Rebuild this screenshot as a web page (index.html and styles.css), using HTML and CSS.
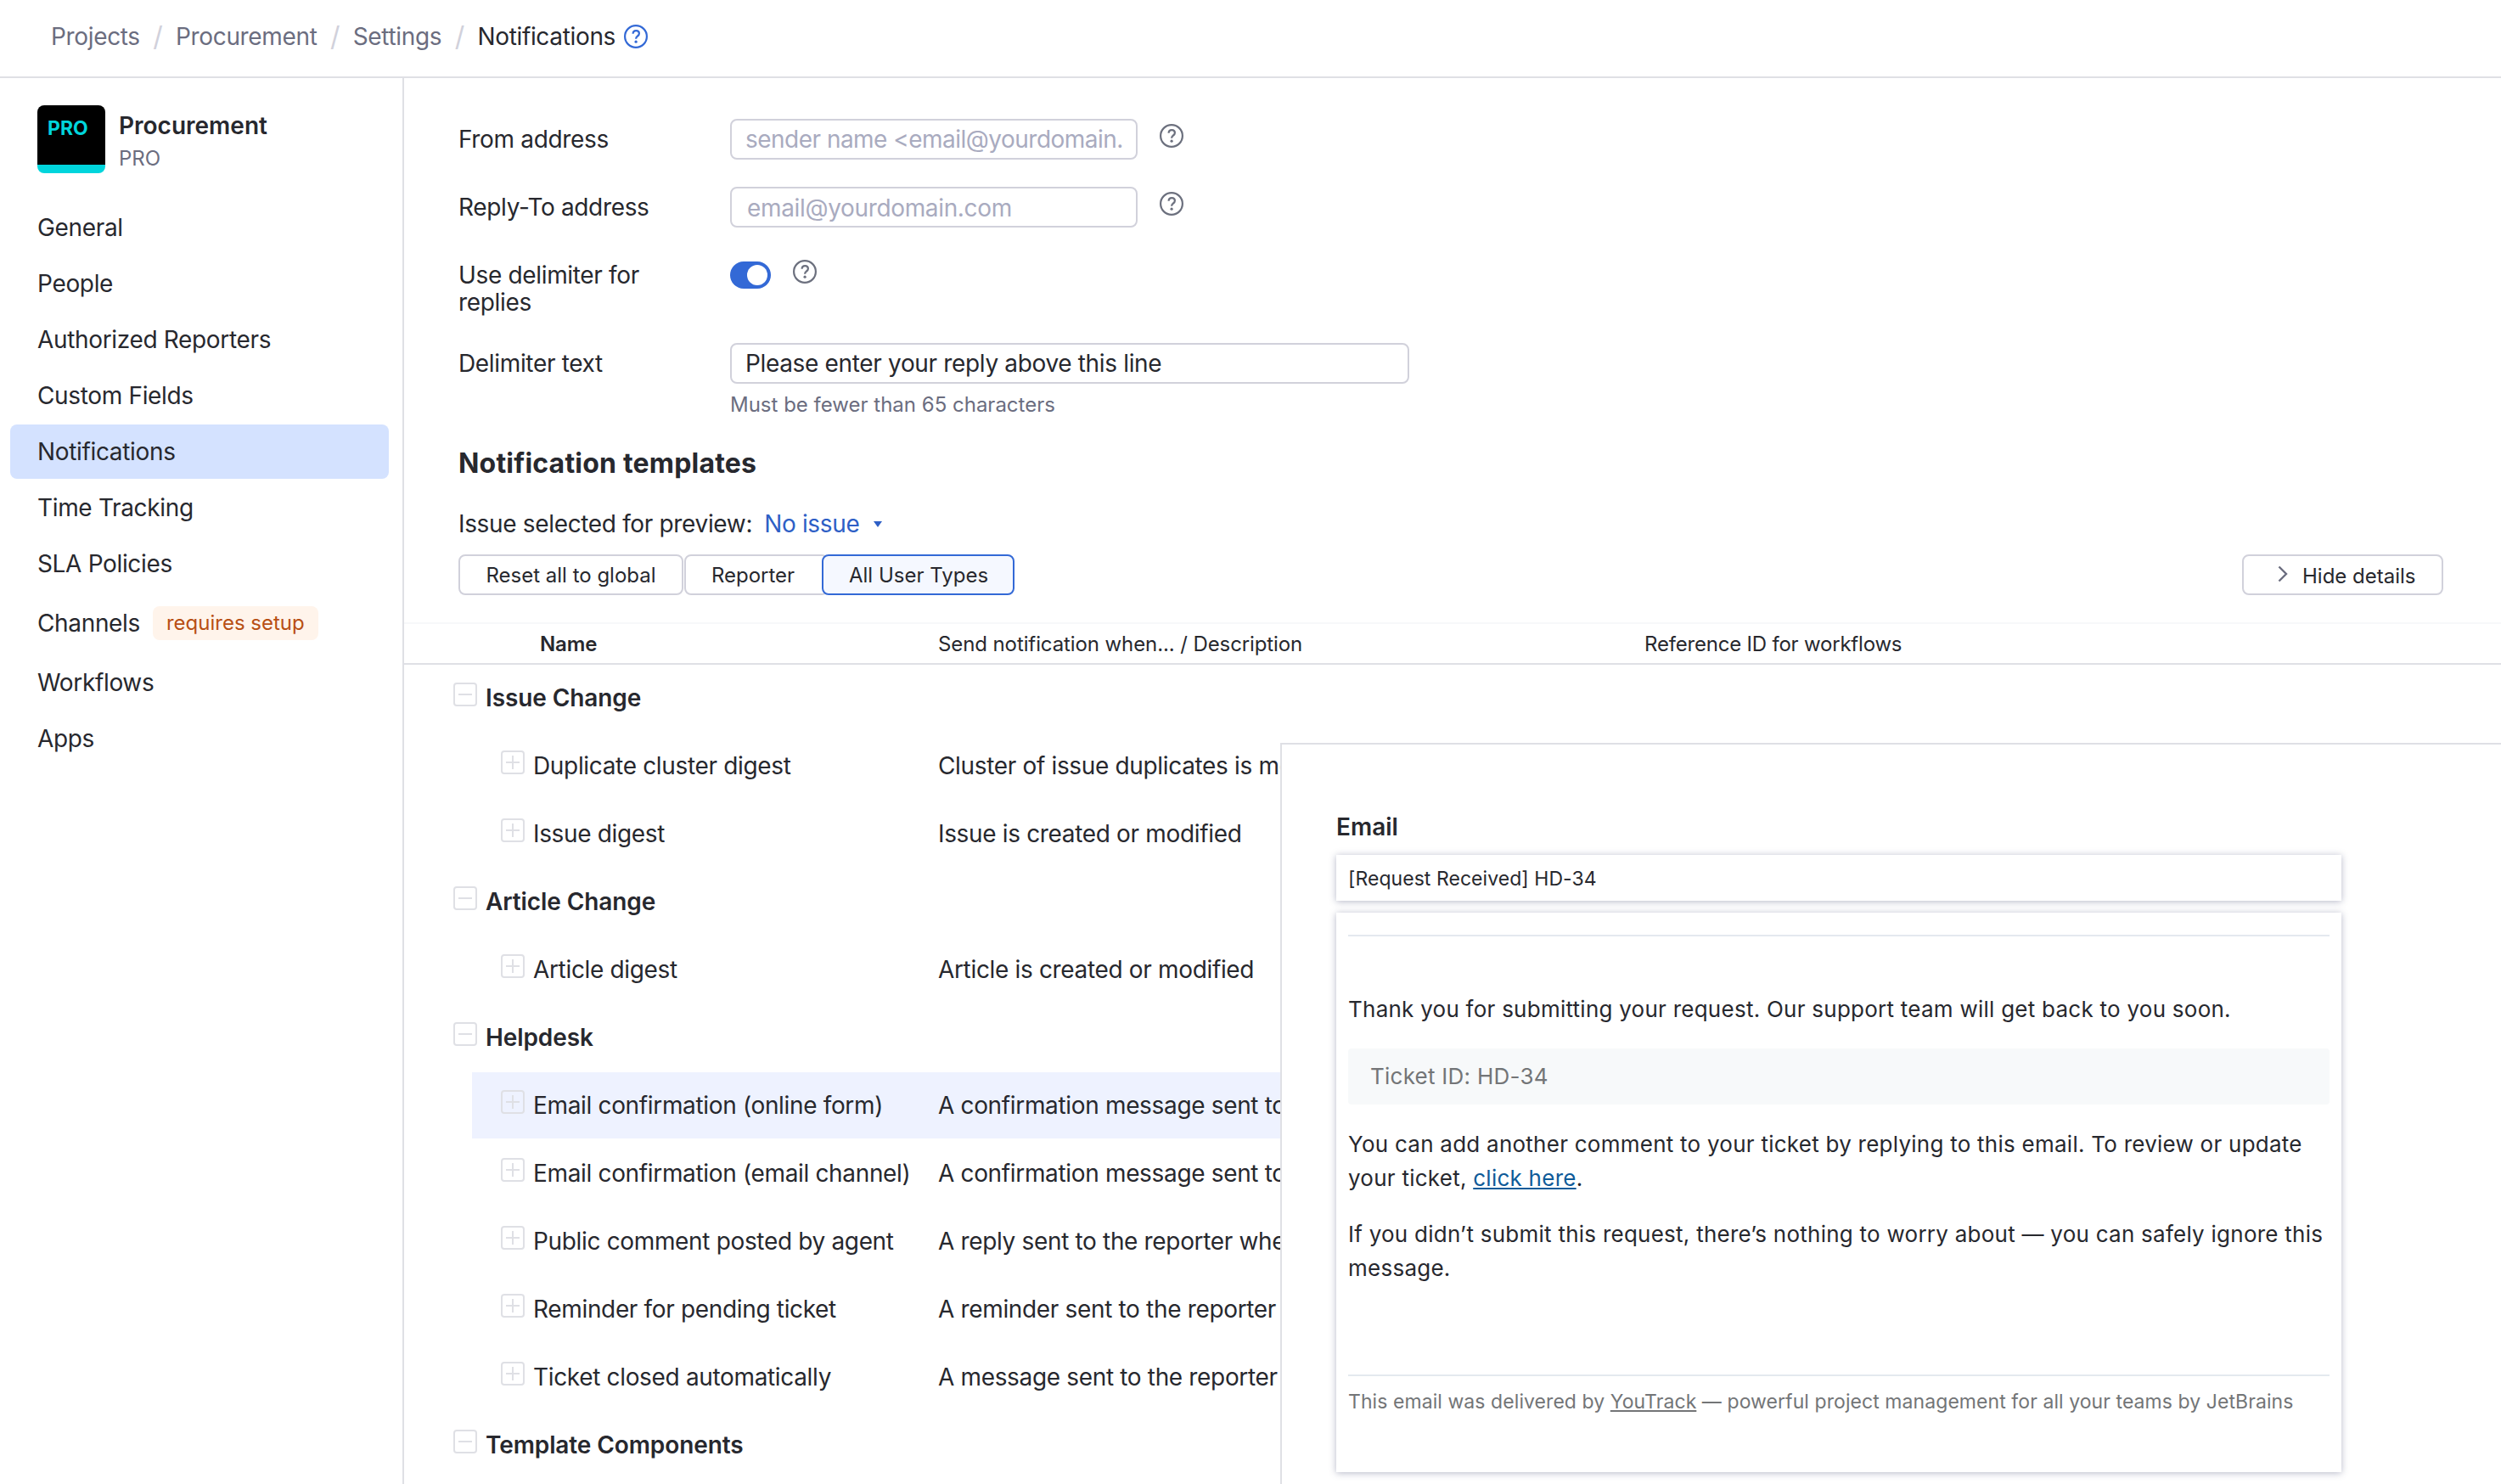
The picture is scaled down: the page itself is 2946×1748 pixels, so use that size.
FILE: index.html
```html
<!DOCTYPE html>
<html lang="en">
<head>
  <meta charset="UTF-8">
  <title>Notifications - Procurement</title>
  <link rel="stylesheet" href="styles.css">
</head>
<body>
  <svg width="0" height="0" class="sprite">
    <symbol id="help" viewBox="0 0 28 28">
      <circle cx="14" cy="14" r="12.9" fill="none" stroke="currentColor" stroke-width="2.2"/>
      <path d="M10.6 10.800c0-2.200 1.500-3.700 3.700-3.700s3.600 1.400 3.600 3.400c0 1.400-.7 2.200-1.900 3-1.300.9-1.900 1.500-1.900 3.300" fill="none" stroke="currentColor" stroke-width="2.2"/>
      <circle cx="14.1" cy="20.2" r="1.600" fill="currentColor"/>
    </symbol>
    <symbol id="minus" viewBox="0 0 28 28">
      <rect x="1" y="1" width="26" height="26" rx="3" fill="none" stroke="currentColor" stroke-width="2"/>
      <path d="M6 14h16" stroke="currentColor" stroke-width="2"/>
    </symbol>
    <symbol id="plus" viewBox="0 0 28 28">
      <rect x="1" y="1" width="26" height="26" rx="3" fill="none" stroke="currentColor" stroke-width="2"/>
      <path d="M6 14h16M14 6v16" stroke="currentColor" stroke-width="2"/>
    </symbol>
  </svg>

  <header class="breadcrumbs">
    <a>Projects</a><span class="sep">/</span>
    <a>Procurement</a><span class="sep">/</span>
    <a>Settings</a><span class="sep">/</span>
    <span class="current">Notifications</span>
    <svg class="help help-blue"><use href="#help"/></svg>
  </header>

  <div class="page">
    <aside class="sidebar">
      <div class="project">
        <div class="avatar">PRO</div>
        <div>
          <div class="project-name">Procurement</div>
          <div class="project-key">PRO</div>
        </div>
      </div>
      <nav>
        <a class="nav-item">General</a>
        <a class="nav-item">People</a>
        <a class="nav-item">Authorized Reporters</a>
        <a class="nav-item">Custom Fields</a>
        <a class="nav-item active">Notifications</a>
        <a class="nav-item">Time Tracking</a>
        <a class="nav-item">SLA Policies</a>
        <a class="nav-item tall">Channels <span class="tag">requires setup</span></a>
        <a class="nav-item">Workflows</a>
        <a class="nav-item">Apps</a>
      </nav>
    </aside>

    <main>
      <form class="settings">
        <div class="field">
          <label>From address</label>
          <input type="text" class="from" placeholder="sender name &lt;email@yourdomain.">
          <svg class="help"><use href="#help"/></svg>
        </div>
        <div class="field">
          <label>Reply-To address</label>
          <input type="text" class="reply" placeholder="email@yourdomain.com">
          <svg class="help"><use href="#help"/></svg>
        </div>
        <div class="field two-lines">
          <label>Use delimiter for replies</label>
          <span class="toggle"></span>
          <svg class="help"><use href="#help"/></svg>
        </div>
        <div class="field">
          <label>Delimiter text</label>
          <input type="text" class="wide" value="Please enter your reply above this line">
        </div>
        <p class="hint">Must be fewer than 65 characters</p>
      </form>

      <h2>Notification templates</h2>
      <div class="preview-issue">Issue selected for preview: <a>No issue</a><svg class="caret" viewBox="0 0 10 7"><path d="M0 0h10L5 7z" fill="currentColor"/></svg></div>
      <div class="toolbar">
        <button class="reset">Reset all to global</button>
        <button class="reporter">Reporter</button>
        <button class="all selected">All User Types</button>
        <button class="details"><svg viewBox="0 0 12 20"><path d="M1.5 1.5L10 10l-8.500 8.500" fill="none" stroke="currentColor" stroke-width="2.400"/></svg>Hide details</button>
      </div>

      <div class="table-head">
        <span class="col-name">Name</span>
        <span class="col-desc">Send notification when... / Description</span>
        <span class="col-ref">Reference ID for workflows</span>
      </div>
      <div class="row group"><svg><use href="#minus"/></svg>Issue Change</div>
      <div class="row"><svg><use href="#plus"/></svg><span class="name">Duplicate cluster digest</span><span>Cluster of issue duplicates is modified</span></div>
      <div class="row"><svg><use href="#plus"/></svg><span class="name">Issue digest</span><span>Issue is created or modified</span></div>
      <div class="row group"><svg><use href="#minus"/></svg>Article Change</div>
      <div class="row"><svg><use href="#plus"/></svg><span class="name">Article digest</span><span>Article is created or modified</span></div>
      <div class="row group"><svg><use href="#minus"/></svg>Helpdesk</div>
      <div class="row highlighted"><svg><use href="#plus"/></svg><span class="name">Email confirmation (online form)</span><span>A confirmation message sent to</span></div>
      <div class="row"><svg><use href="#plus"/></svg><span class="name">Email confirmation (email channel)</span><span>A confirmation message sent to</span></div>
      <div class="row"><svg><use href="#plus"/></svg><span class="name">Public comment posted by agent</span><span>A reply sent to the reporter when</span></div>
      <div class="row"><svg><use href="#plus"/></svg><span class="name">Reminder for pending ticket</span><span>A reminder sent to the reporter</span></div>
      <div class="row"><svg><use href="#plus"/></svg><span class="name">Ticket closed automatically</span><span>A message sent to the reporter</span></div>
      <div class="row group"><svg><use href="#minus"/></svg>Template Components</div>

      <!-- details panel, slides over the table -->
      <section class="panel">
        <h3>Email</h3>
        <div class="card subject">[Request Received] HD-34</div>
        <div class="card message">
          <hr>
          <p class="thanks">Thank you for submitting your request. Our support team will get back to you soon.</p>
          <div class="ticket">Ticket ID: HD-34</div>
          <p>You can add another comment to your ticket by replying to this email. To review or update<br>your ticket, <a>click here</a>.</p>
          <p>If you didn’t submit this request, there’s nothing to worry about — you can safely ignore this<br>message.</p>
          <hr class="bottom">
          <div class="footer">This email was delivered by <a>YouTrack</a> — powerful project management for all your teams by JetBrains</div>
        </div>
      </section>
    </main>
  </div>
</body>
</html>
```
FILE: styles.css
```css
* { box-sizing: border-box; }
body { margin: 0; height: 1748px; overflow: hidden; display: flex; flex-direction: column; background: #fff; color: #27282e; font: 28px/32px Inter, "Liberation Sans", sans-serif; letter-spacing: -0.34px; white-space: nowrap; }
.sprite { position: absolute; }
h2, h3, p { margin: 0; }

.help { width: 28px; height: 28px; color: #6c707e; flex: none; }
.help-blue { color: #3369d6; margin-left: 10px; }

/* header */
.breadcrumbs { display: flex; align-items: center; height: 92px; padding: 0 0 4px 60px; border-bottom: 2px solid #dfe0e5; color: #6b6d7f; flex: none; }
.breadcrumbs .sep { margin: 0 15.5px; color: #d1d1db; font-size: 32px; }
.breadcrumbs .current { color: #27282e; }

.page { display: flex; flex: 1; min-height: 0; }

/* sidebar */
.sidebar { width: 476px; padding: 32px 16px 0 12px; border-right: 2px solid #dfe0e5; flex: none; }
.project { display: flex; gap: 16px; height: 112px; padding-left: 32px; }
.avatar { width: 80px; height: 80px; padding: 11px 0 0 12px; border-radius: 8px; background: linear-gradient(#000 70px, #00d5dc 70px); color: #00d5dc; font-size: 23px; font-weight: 700; letter-spacing: 0; }
.project-name { margin-top: 8px; font-weight: 600; letter-spacing: 0; }
.project-key { margin-top: 7px; font-size: 24px; letter-spacing: 0; color: #6b6d7f; }
.nav-item { display: flex; align-items: center; height: 64px; margin-bottom: 2px; padding-left: 32px; border-radius: 8px; }
.nav-item.active { background: #d4e2ff; }
.nav-item.tall { height: 72px; }
.tag { height: 40px; margin-left: 15px; padding: 0 16px; border-radius: 8px; background: #fff4eb; color: #b84f14; font-size: 24px; letter-spacing: 0; line-height: 40px; }

/* settings form */
main { position: relative; flex: 1; min-width: 0; overflow: hidden; }
.settings { padding: 48px 0 0 64px; }
.field { display: flex; height: 48px; margin-bottom: 32px; }
.field.two-lines { height: 72px; }
.field label { width: 320px; padding: 8px 80px 0 0; white-space: normal; }
.field .help { margin: 6px 0 0 26px; }
.field input { width: 480px; height: 48px; padding: 0 10px 0 16px; border: 2px solid #d1d1db; border-radius: 8px; font: inherit; letter-spacing: inherit; color: inherit; background: #fff; }
.field input::placeholder { color: #a9abbf; }
.field input.from { letter-spacing: -0.52px; }
.field input.reply { padding: 1px 10px 0 18px; }
.field input.wide { width: 800px; }
.toggle { display: flex; justify-content: flex-end; width: 48px; height: 32px; margin-top: 8px; padding: 4px; border-radius: 16px; background: #3369d6; }
.toggle::after { content: ""; width: 24px; height: 24px; border-radius: 50%; background: #fff; }
.hint { margin: -24px 0 0 320px; font-size: 24px; letter-spacing: 0; color: #6b6d7f; line-height: 34px; }

h2 { margin: 32px 0 0 64px; font-size: 32px; line-height: 40px; font-weight: 700; letter-spacing: 0.2px; }
.preview-issue { display: flex; align-items: center; height: 32px; margin: 35px 0 0 64px; }
.preview-issue a { margin-left: 14px; color: #2e5fc6; }
.caret { width: 10px; height: 7px; margin-left: 17px; color: #2e5fc6; }

.toolbar { display: flex; height: 48px; margin: 20px 0 32px 64px; padding-right: 68px; }
button { height: 48px; padding: 0 30px; border: 2px solid #d1d1db; border-radius: 8px; background: #fff; color: inherit; font: 24px Inter, sans-serif; letter-spacing: 0; }
.reset { width: 265px; }
.reporter { width: 170px; margin-left: 1px; padding: 0 36px 0 28px; }
.all { width: 227px; margin-left: -8px; }
.selected { border-color: #3369d6; background: #f5f8ff; }
.details { display: flex; align-items: center; width: 237px; margin-left: auto; padding: 2px 0 0 40px; }
.details svg { width: 12px; height: 20px; margin: -4px 17px 0 0; color: #6b6d7f; }

/* templates table */
.table-head { display: flex; align-items: center; height: 50px; padding: 1px 0 0 160px; border-top: 2px solid #f7f8fa; border-bottom: 2px solid #dfe0e5; font-size: 24px; letter-spacing: -0.1px; }
.col-name { width: 469px; font-weight: 600; }
.col-desc { width: 832px; }
.col-ref { letter-spacing: -0.2px; }
.row { display: flex; align-items: center; height: 78px; margin: 0 0 2px 80px; padding-left: 34px; }
.row svg { width: 28px; height: 28px; margin: -8px 10px 0 0; color: #dfe0e5; }
.row .name { width: 477px; }
.row.group { margin-left: 0; padding-left: 58px; font-weight: 600; letter-spacing: -0.1px; }
.highlighted { background: #eef2ff; }

/* email preview */
.panel { position: absolute; top: 783px; left: 1032px; right: 0; height: 900px; padding: 80px 0 0 64px; border: solid #dfe0e5; border-width: 2px 0 0 2px; background: #fff; }
h3 { font-size: 28px; line-height: 34px; font-weight: 600; letter-spacing: 0; }
.card { width: 1184px; padding: 0 14px; background: #fff; box-shadow: 0 1px 8px rgba(50, 55, 100, .36); }
.subject { height: 54px; margin: 16px 0 14px; font-size: 23px; letter-spacing: 0.05px; line-height: 56px; }
.message { height: 659px; padding-top: 26px; font-size: 26px; letter-spacing: 0.25px; line-height: 40px; }
.message p { margin-bottom: 26px; }
.message .thanks { margin: 66px 0 26px; }
hr { height: 2px; margin: 0; border: 0; background: #e4e9ef; }
.ticket { height: 66px; margin-bottom: 27px; padding-left: 26px; border-radius: 4px; background: #f7f9fa; color: #737577; line-height: 66px; }
.message a { color: #0f5b99; text-decoration: underline; }
hr.bottom { margin-top: 105px; }
.message .footer { margin-top: 10px; font-size: 23px; letter-spacing: 0.07px; color: #737577; }
.message .footer a { color: inherit; }
```
